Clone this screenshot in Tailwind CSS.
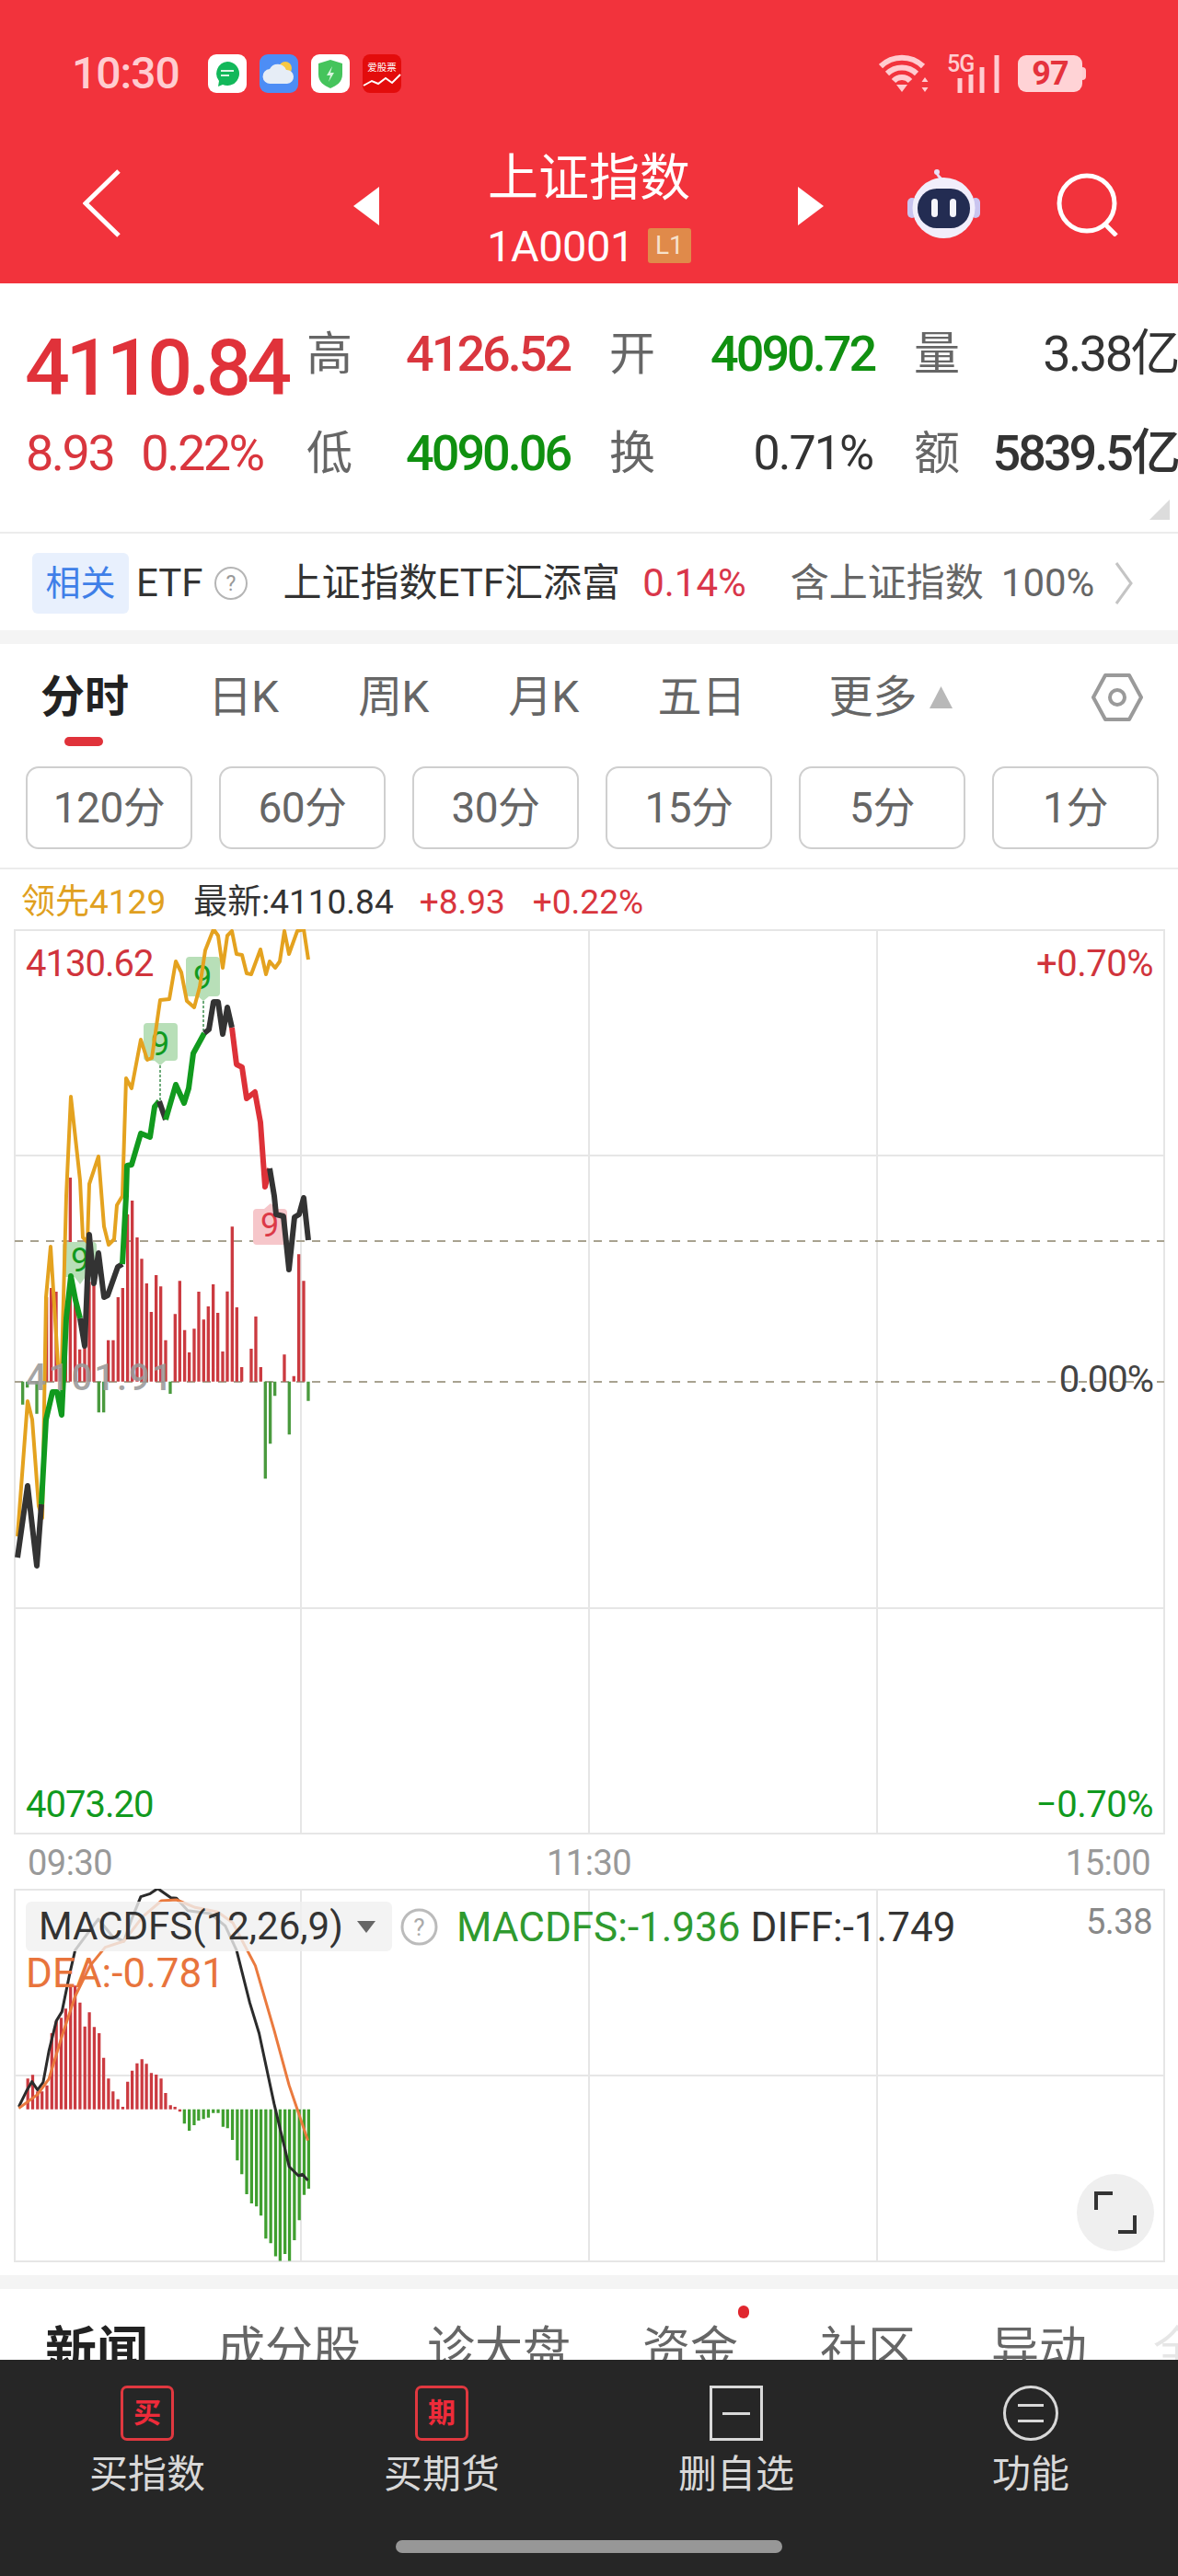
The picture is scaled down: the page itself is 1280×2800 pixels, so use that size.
<!DOCTYPE html>
<html lang="zh">
  <head>
    <meta charset="UTF-8" />
    <meta name="viewport" content="width=device-width, initial-scale=1.0" />
    <script src="https://cdn.jsdelivr.net/npm/@tailwindcss/browser@4"></script>
    <title>上证指数</title>
  </head>
  <body class="bg-white font-[Roboto,'Noto_Sans_CJK_SC',sans-serif]">
    <div class="w-[1280px] h-[2800px] flex flex-col overflow-hidden">

      <!-- red header -->
      <header class="h-[308px] shrink-0 bg-[#f2333c]">
        <div class="h-[160px] flex items-center pl-[78px] pr-[100px]">
          <span class="w-[118px] text-[48px] leading-none font-medium tracking-[-1px] text-[#ffccd0]">10:30</span>
          <div class="ml-[30px] flex gap-[14px]">
            <svg class="w-[42px] h-[42px]" viewBox="0 0 42 42"><rect width="42" height="42" rx="9" fill="#fff"/><path d="M21 8a13 13 0 1 1-5 25l-5 2 1-6a13 13 0 0 1 9-21z" fill="#12b85a"/><path d="M14 18h14M14 23h9" stroke="#d8f5e3" stroke-width="2"/></svg>
            <svg class="w-[42px] h-[42px]" viewBox="0 0 42 42"><rect width="42" height="42" rx="9" fill="#4d8df5"/><circle cx="28" cy="15" r="7" fill="#f7c843"/><path d="M12 32a8 8 0 0 1-1-16 10 10 0 0 1 18 1 7.500 7.500 0 0 1 1 15z" fill="#e6edf6"/></svg>
            <svg class="w-[42px] h-[42px]" viewBox="0 0 42 42"><rect width="42" height="42" rx="9" fill="#fff"/><path d="M21 6l13 4v12c0 8-6 12-13 15-7-3-13-7-13-15V10z" fill="#45c45c"/><path d="M23 13l-6 10h4l-2 7 6-10h-4z" fill="#d8f5de"/></svg>
            <svg class="w-[42px] h-[42px]" viewBox="0 0 42 42"><rect width="42" height="42" rx="8" fill="#e30c0c"/><text x="21" y="18" text-anchor="middle" font-size="10.500" fill="#fff" font-family="Noto Sans CJK SC">爱股票</text><path d="M1 34l9-5 7 3 8-6 7 5 9-9" fill="none" stroke="#fff" stroke-width="2"/></svg>
          </div>
          <div class="ml-auto flex items-center">
            <svg class="w-[57px] h-[42px]" viewBox="0 0 57 42" fill="none" stroke="#ffccd0" stroke-width="6"><path d="M2 13a33 33 0 0 1 46 0M9 21a23 23 0 0 1 32 0M16 29a12 12 0 0 1 18 0"/><path d="M25 41l-6-8h12z" fill="#ffccd0" stroke="none"/><path d="M50 25l3.500 5h-7zM50 41l3.500-5h-7z" fill="#ffccd0" stroke="none"/></svg>
            <svg class="ml-[17px] w-[57px] h-[42px]" viewBox="0 0 57 42"><text x="0" y="19" font-size="25" font-weight="500" fill="#ffccd0" font-family="Roboto" letter-spacing="-1">5G</text><path d="M14 42V26M26 42V22M38 42V14M54 42V1" stroke="#ffccd0" stroke-width="5"/></svg>
            <div class="ml-[20px] flex items-center">
              <span class="w-[70px] h-[40px] rounded-[9px] bg-[#ffd3d6] flex items-center justify-center text-[36px] leading-none font-bold tracking-[-1px] text-[#e5323c]">97</span>
              <span class="w-[4px] h-[14px] rounded-r bg-[#ffccd0]"></span>
            </div>
          </div>
        </div>
        <nav class="h-[148px] flex items-start pl-[90px]">
          <svg class="mt-[24px] w-[41px] h-[74px]" viewBox="0 0 41 74" fill="none" stroke="#fff" stroke-width="5"><path d="M39 2L3 37l36 35"/></svg>
          <svg class="ml-[253px] mt-[43px] w-[28px] h-[42px]" viewBox="0 0 28 42"><path d="M28 0v42L0 21z" fill="#fff"/></svg>
          <div class="ml-[28px] w-[400px] flex flex-col items-center text-white">
            <div class="mt-[3px] text-[55px] leading-[60px]">上证指数</div>
            <div class="mt-[21px] h-[46px] flex items-center">
              <span class="text-[47px] leading-none tracking-[-0.5px]">1A0001</span>
              <span class="ml-[15px] w-[47px] h-[38px] rounded-[3px] bg-[#e08a4a] flex items-center justify-center text-[28px] leading-none text-[#f7e2cc]">L1</span>
            </div>
          </div>
          <svg class="ml-[27px] mt-[43px] w-[28px] h-[42px]" viewBox="0 0 28 42"><path d="M0 0v42L28 21z" fill="#fff"/></svg>
          <svg class="ml-[90px] mt-[23px] w-[81px] h-[76px]" viewBox="0 0 81 76">
            <path d="M40 14c-3-4-6-5-7-9" fill="none" stroke="#e9dff6" stroke-width="3"/><circle cx="33" cy="4" r="3" fill="#e9dff6"/>
            <rect x="1" y="32" width="10" height="22" rx="5" fill="#c9c4ef"/><rect x="70" y="32" width="10" height="22" rx="5" fill="#c9c4ef"/>
            <ellipse cx="40.500" cy="43" rx="34" ry="33" fill="#f1eefb"/>
            <rect x="12" y="22" width="57" height="43" rx="21" fill="#232c52"/>
            <rect x="27" y="33" width="7" height="20" rx="3.500" fill="#f4f4fb"/><rect x="47" y="33" width="7" height="20" rx="3.500" fill="#f4f4fb"/>
          </svg>
          <svg class="ml-[82px] mt-[28px] w-[69px] h-[69px]" viewBox="0 0 69 69" fill="none" stroke="#fff" stroke-width="5"><circle cx="33" cy="33" r="30"/><path d="M52 55l13 13"/></svg>
        </nav>
      </header>

      <!-- quote numbers -->
      <section class="relative h-[272px] shrink-0 border-b-2 border-[#ececec] pt-[23px]">
        <div class="grid grid-cols-[333px_108px_221px_110px_221px_1fr] auto-rows-[108px] items-center text-[50px] leading-none text-[#666]">
          <div class="pl-[27px] pt-[30px] text-[86px] font-medium tracking-[-4.500px] text-[#e0323a]">4110.84</div>
          <div>高</div>
          <div class="pr-[46px] text-right text-[54px] font-medium tracking-[-3px] text-[#d9363e]">4126.52</div>
          <div>开</div>
          <div class="pr-[45px] text-right text-[54px] font-medium tracking-[-3px] text-[#109010]">4090.72</div>
          <div class="flex items-center justify-between whitespace-nowrap"><span>量</span><span class="text-[54px] tracking-[-2.500px] text-[#333]">3.38亿</span></div>

          <div class="pl-[28px] flex gap-[30px] text-[54px] tracking-[-2.500px] text-[#d9363e]"><span>8.93</span><span>0.22%</span></div>
          <div>低</div>
          <div class="pr-[46px] text-right text-[54px] font-medium tracking-[-3px] text-[#109010]">4090.06</div>
          <div>换</div>
          <div class="pr-[45px] text-right text-[52px] tracking-[-2px] text-[#333]">0.71%</div>
          <div class="flex items-center justify-between whitespace-nowrap"><span>额</span><span class="text-[54px] font-medium tracking-[-3px] text-[#333]">5839.5亿</span></div>
        </div>
        <svg class="absolute right-[9px] bottom-[13px] w-[22px] h-[22px]" viewBox="0 0 22 22"><path d="M22 0v22H0z" fill="#dcdcdc"/></svg>
      </section>

      <!-- related ETF -->
      <section class="h-[105px] shrink-0 flex items-center pl-[35px] pt-[2px] text-[42px] leading-none whitespace-nowrap">
        <span class="w-[105px] h-[66px] rounded-[6px] bg-[#e8f0fd] flex items-center justify-center text-[38px] text-[#3f7fe8]">相关</span>
        <span class="ml-[8px] text-[#333]">ETF</span>
        <svg class="ml-[11px] w-[38px] h-[38px]" viewBox="0 0 38 38" fill="none"><circle cx="19" cy="19" r="17" stroke="#b5b5b5" stroke-width="2"/><text x="19" y="27" text-anchor="middle" font-size="23" fill="#999" font-family="Roboto">?</text></svg>
        <span class="ml-[38px] text-[#333]">上证指数ETF汇添富</span>
        <span class="ml-[24px] text-[#d9364a]">0.14%</span>
        <span class="ml-[48px] text-[#666]">含上证指数</span>
        <span class="ml-[19px] text-[#666]">100%</span>
        <svg class="ml-[22px] w-[20px] h-[48px]" viewBox="0 0 20 48" fill="none" stroke="#c4c4c4" stroke-width="3"><path d="M2 2l16 22L2 46"/></svg>
      </section>
      <div class="h-[15px] shrink-0 bg-[#f4f4f4]"></div>

      <!-- period tabs -->
      <section class="relative h-[133px] shrink-0 text-[48px] leading-none text-[#666] whitespace-nowrap">
        <div class="h-[118px] flex items-center pl-[44px] pb-[2px]">
          <span class="font-bold text-[#222]">分时</span>
          <span class="ml-[86px] tracking-[-1px]">日K</span>
          <span class="ml-[87px] tracking-[-1px]">周K</span>
          <span class="ml-[87px] tracking-[-1px]">月K</span>
          <span class="ml-[86px]">五日</span>
          <span class="ml-[90px]">更多</span>
          <svg class="ml-[14px] w-[25px] h-[24px]" viewBox="0 0 25 24"><path d="M12.500 0L25 24H0z" fill="#b8b8b8"/></svg>
          <svg class="ml-[151px] w-[56px] h-[54px]" viewBox="0 0 56 54" fill="none" stroke="#9a9a9a" stroke-width="4"><path d="M15 3h26l13 24-13 24H15L2 27z" stroke-linejoin="round"/><circle cx="28" cy="27" r="8"/></svg>
        </div>
        <span class="absolute left-[70px] top-[101px] w-[42px] h-[10px] rounded-full bg-[#e0323a]"></span>
      </section>
      <section class="h-[112px] shrink-0 border-b-2 border-[#ececec] pl-[28px] pr-[21px]">
        <div class="grid grid-cols-6 gap-[29px] text-[46px] leading-none text-[#666]">
          <button class="h-[90px] rounded-[14px] border-2 border-[#cfcfcf] tracking-[-0.5px]">120分</button>
          <button class="h-[90px] rounded-[14px] border-2 border-[#cfcfcf] tracking-[-0.5px]">60分</button>
          <button class="h-[90px] rounded-[14px] border-2 border-[#cfcfcf] tracking-[-0.5px]">30分</button>
          <button class="h-[90px] rounded-[14px] border-2 border-[#cfcfcf] tracking-[-0.5px]">15分</button>
          <button class="h-[90px] rounded-[14px] border-2 border-[#cfcfcf] tracking-[-0.5px]">5分</button>
          <button class="h-[90px] rounded-[14px] border-2 border-[#cfcfcf] tracking-[-0.5px]">1分</button>
        </div>
      </section>

      <!-- chart legend -->
      <div class="h-[65px] shrink-0 flex items-center pl-[23px] pt-[5px] text-[37px] leading-none whitespace-nowrap">
        <span class="text-[#e0a020]">领先4129</span>
        <span class="ml-[30px] text-[#333]">最新:4110.84</span>
        <span class="ml-[28px] text-[#d9363e]">+8.93</span>
        <span class="ml-[30px] text-[#d9363e]">+0.22%</span>
      </div>

      <!-- time-share chart -->
      <section class="relative h-[984px] shrink-0 text-[40px] leading-none">
        <svg class="absolute inset-0 w-[1280px] h-[984px]" viewBox="0 1010 1280 984" fill="none">
          <path d="M16 1011H1265V1993H16ZM327 1011V1993M640 1011V1993M953 1011V1993M16 1256H1265M16 1748H1265" stroke="#e6e6e6" stroke-width="2"/>
          <path d="M16 1349H1265M16 1502H1265" stroke="#a8a290" stroke-width="2" stroke-dasharray="9 8"/>
          <g transform="translate(0 1300) scale(.3333)" stroke-width="10">
            <path d="M152 605V330M167 605V300M183 605V312M198 605V560M214 605V480M229 605V-60M245 605V350M260 605V500M276 605V420M291 605V280M306 605V290M353 605V470M369 605V470M385 605V330M400 605V300M416 605V60M431 605V15M447 605V135M462 605V205M478 605V285M493 605V378M509 605V258M524 605V295M540 605V470M571 605V385M586 605V277M602 605V437M617 605V510M633 605V433M648 605V312M664 605V403M679 605V360M695 605V288M710 605V381M726 605V507M741 605V311M757 605V100M772 605V363M788 605V558M819 605V498M834 605V393M850 605V558M927 605V517M958 605V587M974 605V190M990 605V277" stroke="#cb3a40"/>
            <path d="M74 605V680M89 605V625M120 605V710M322 605V706M338 605V706M555 605V645M865 605V922M881 605V808M896 605V652M943 605V778M1005 605V668" stroke="#4a9a3e"/>
          </g>
          <!-- signal badges -->
          <path d="M156 1116a4 4 0 0 1 4-4h29a4 4 0 0 1 4 4v33a4 4 0 0 1-4 4h-9l-6 5-6-5h-8a4 4 0 0 1-4-4zM202 1044a4 4 0 0 1 4-4h29a4 4 0 0 1 4 4v35a4 4 0 0 1-4 4h-8l-6 5-6-5h-9a4 4 0 0 1-4-4zM68 1354a4 4 0 0 1 4-4h29a4 4 0 0 1 4 4v30a4 4 0 0 1-4 4h-8l-6 8-6-8h-9a4 4 0 0 1-4-4z" fill="#b8dfb8"/>
          <path d="M275 1318a4 4 0 0 1 4-4h8l7-6 7 6h7a4 4 0 0 1 4 4v31a4 4 0 0 1-4 4h-29a4 4 0 0 1-4-4z" fill="#f6c6ca"/>
          <path d="M174 1158V1197M221 1088V1120" stroke="#3f8f4f" stroke-width="1.500" stroke-dasharray="3 2"/>
          <path d="M87 1396V1432" stroke="#fff" stroke-width="1.500" stroke-dasharray="3 2"/>
          <g font-family="Roboto" font-size="36" text-anchor="middle">
            <text x="174" y="1147" fill="#119a1e">9</text><text x="220" y="1075" fill="#119a1e">9</text><text x="87" y="1382" fill="#119a1e">9</text><text x="293" y="1344" fill="#dc3a48">9</text>
          </g>
          <!-- leading line -->
          <path d="M19 1670L30 1523 35 1543 42 1637 46 1650 50 1410 55 1355 63 1483 67 1485 72 1300 77 1192 87 1283 90 1345 95 1350 97 1287 107 1257 113 1333 118 1353 124 1347 127 1310 133 1300 137 1172 143 1183 153 1130 160 1152 165 1150 174 1087 184 1086 191 1045 197 1057 203 1088 211 1095 217 1073 223 1033 232 1010 237 1017 242 1052 247 1017 252 1012 257 1037 263 1038 268 1058 273 1059 283 1032 289 1059 293 1045 299 1052 304 1045 309 1012 314 1037 323 1012 330 1010 335 1043" stroke="#e4a21f" stroke-width="4" stroke-linejoin="round"/>
          <!-- price line -->
          <g stroke-width="6" stroke-linejoin="round">
            <path d="M19 1693L30 1615 40 1702 45 1635" stroke="#333"/>
            <path d="M45 1635L50 1543 57 1513 62 1513 67 1538 72 1433 77 1387 82 1413 87 1433" stroke="#119a1e"/>
            <path d="M87 1433L92 1463 97 1342 102 1395 107 1362 113 1410 117 1408 128 1377 133 1374" stroke="#333"/>
            <path d="M133 1374L137 1300 138 1267 143 1266 153 1232 163 1236 168 1203 173 1197" stroke="#119a1e"/>
            <path d="M173 1197L180 1217" stroke="#333"/>
            <path d="M180 1217L191 1179 200 1199 205 1183 210 1145 222 1123" stroke="#119a1e"/>
            <path d="M222 1123L227 1119 232 1089 237 1089 242 1124 247 1095 252 1117" stroke="#333"/>
            <path d="M252 1117L257 1157 263 1160 268 1194 277 1187 283 1220 288 1290 293 1270" stroke="#dd3138"/>
            <path d="M293 1270L298 1300 300 1320 308 1322 314 1380 320 1323 325 1320 330 1302 335 1348" stroke="#333"/>
          </g>
        </svg>
        <span class="absolute left-[28px] top-[18px] tracking-[-1px] text-[#d0343c]">4130.62</span>
        <span class="absolute right-[27px] top-[18px] tracking-[-0.5px] text-[#d0343c]">+0.70%</span>
        <span class="absolute left-[28px] top-[468px] tracking-[2px] text-[#999]/90 font-medium">4101.91</span>
        <span class="absolute right-[27px] top-[470px] tracking-[-1px] text-[#444]">0.00%</span>
        <span class="absolute left-[28px] top-[932px] tracking-[-1px] text-[#119a1e]">4073.20</span>
        <span class="absolute right-[27px] top-[932px] tracking-[-0.5px] text-[#119a1e]">−0.70%</span>
      </section>

      <!-- time axis -->
      <div class="h-[59px] shrink-0 relative flex items-center justify-between px-[30px] pt-[2px] text-[38px] leading-none tracking-[-0.5px] text-[#999]">
        <span>09:30</span>
        <span class="absolute left-[594px]">11:30</span>
        <span>15:00</span>
      </div>

      <!-- MACD -->
      <section class="relative h-[407px] shrink-0 leading-none whitespace-nowrap">
        <svg class="absolute inset-0 w-[1280px] h-[407px]" viewBox="0 2053 1280 407" fill="none">
          <path d="M16 2054H1265V2458H16ZM327 2054V2458M640 2054V2458M953 2054V2458M16 2256H1265" stroke="#e6e6e6" stroke-width="2"/>
          <g transform="translate(0 1980) scale(.408 .3333)" stroke-width="8">
            <path d="M74 938V838M87 938V826M100 938V880M112 938V880M125 938V860M138 938V690M150 938V650M163 938V640M175 938V610M188 938V535M200 938V535M213 938V590M226 938V668M238 938V622M251 938V670M264 938V690M276 938V770M289 938V838M301 938V880M314 938V905M327 938V930M340 938V848M352 938V812M365 938V788M378 938V775M390 938V790M403 938V820M416 938V825M429 938V838M441 938V885M454 938V925M466 938V930M479 938V946" stroke="#cb3a40"/>
            <path d="M491 938V985M504 938V1008M517 938V990M529 938V975M542 938V970M555 938V965M568 938V950M581 938V950M594 938V995M606 938V1000M619 938V1038M632 938V1105M644 938V1150M657 938V1215M670 938V1245M683 938V1255M695 938V1285M708 938V1360M721 938V1375M734 938V1418M746 938V1433M759 938V1410M771 938V1433M784 938V1365M797 938V1300M810 938V1217M822 938V1197" stroke="#3f9f2f"/>
            <path d="M50 930L70 880 85 848 100 875 115 850 130 750 150 650 165 620 185 500 200 420 230 370 262 318 300 375 330 390 350 320 375 245 400 235 420 218 455 248 470 250 500 290 560 300 600 340 630 420 665 590 690 690 730 920 770 1125 795 1155 805 1150 820 1170" stroke="#2b2b2b" stroke-width="3" vector-effect="non-scaling-stroke" stroke-linejoin="round"/>
            <path d="M50 935L100 890 130 840 165 700 200 570 240 470 280 410 330 390 380 310 430 258 470 255 520 280 580 295 620 330 680 470 730 680 770 860 820 1040" stroke="#ea7a3e" stroke-width="3" vector-effect="non-scaling-stroke" stroke-linejoin="round"/>
          </g>
        </svg>
        <div class="absolute left-[28px] top-[14px] w-[398px] h-[54px] rounded-[6px] bg-[#f0f0f0]/80 flex items-center pl-[14px] text-[42px] text-[#333]">
          MACDFS(12,26,9)
          <svg class="absolute left-[360px] top-[21px] w-[20px] h-[13px]" viewBox="0 0 20 13"><path d="M0 0h20L10 13z" fill="#666"/></svg>
        </div>
        <svg class="absolute left-[435px] top-[21px] w-[41px] h-[41px]" viewBox="0 0 41 41" fill="none"><circle cx="20.500" cy="20.500" r="18.500" stroke="#bbb" stroke-width="3"/><text x="20.500" y="30" text-anchor="middle" font-size="26" fill="#aaa" font-family="Roboto">?</text></svg>
        <div class="absolute left-[496px] top-[21px] h-[41px] flex items-center text-[44px]">
          <span class="text-[#2f9a2f]">MACDFS:-1.936</span>
          <span class="ml-[11px] text-[#333]">DIFF:-1.749</span>
        </div>
        <span class="absolute left-[28px] top-[70px] text-[44px] text-[#e8743c]">DEA:-0.781</span>
        <span class="absolute right-[28px] top-[17px] text-[38px] tracking-[-0.5px] text-[#888]">5.38</span>
        <div class="absolute left-[1170px] top-[310px] w-[84px] h-[84px] rounded-full bg-[#efefef] flex items-center justify-center">
          <svg class="w-[46px] h-[46px]" viewBox="0 0 46 46" fill="none" stroke="#333" stroke-width="4"><path d="M2 20V2h18M44 26v18H26"/></svg>
        </div>
      </section>

      <div class="h-[13px] shrink-0"></div>
      <div class="h-[15px] shrink-0 bg-[#f4f4f4]"></div>

      <!-- news tabs, cut off by the toolbar -->
      <section class="relative h-[77px] shrink-0 overflow-hidden text-[52px] leading-none text-[#666] whitespace-nowrap">
        <div class="flex items-start pl-[49px] pt-[40px] w-[1400px]">
          <span class="text-[56px] font-bold text-[#222]">新闻</span>
          <span class="ml-[75px] mt-[1px]">成分股</span>
          <span class="ml-[72px] mt-[1px]">诊大盘</span>
          <span class="ml-[78px] mt-[1px]">资金</span>
          <span class="ml-[89px] mt-[1px]">社区</span>
          <span class="ml-[82px] mt-[1px]">异动</span>
          <span class="ml-[72px] mt-[1px] text-[#e6e6e6]">全部</span>
        </div>
        <span class="absolute left-[802px] top-[18px] w-[12px] h-[14px] rounded-full bg-[#e0262e]"></span>
      </section>

      <!-- bottom toolbar -->
      <footer class="relative h-[235px] shrink-0 bg-[#262626] text-[#d8d8d8]">
        <div class="grid grid-cols-4 pt-[28px]">
          <div class="flex flex-col items-center">
            <span class="w-[58px] h-[60px] rounded-[7px] border-[3px] border-[#e0383f] flex items-center justify-center text-[30px] leading-none font-bold text-[#ee2b3a]">买</span>
            <span class="mt-[16px] text-[42px] leading-none">买指数</span>
          </div>
          <div class="flex flex-col items-center">
            <span class="w-[58px] h-[60px] rounded-[7px] border-[3px] border-[#e0383f] flex items-center justify-center text-[30px] leading-none font-bold text-[#ee2b3a]">期</span>
            <span class="mt-[16px] text-[42px] leading-none">买期货</span>
          </div>
          <div class="flex flex-col items-center">
            <span class="w-[58px] h-[60px] border-[3px] border-[#d8d8d8] flex items-center justify-center"><span class="w-[30px] h-[3px] bg-[#d8d8d8]"></span></span>
            <span class="mt-[16px] text-[42px] leading-none">删自选</span>
          </div>
          <div class="flex flex-col items-center">
            <span class="w-[60px] h-[60px] rounded-full border-[3px] border-[#d8d8d8] flex flex-col items-center justify-center gap-[14px]"><span class="w-[28px] h-[3px] bg-[#d8d8d8]"></span><span class="w-[28px] h-[3px] bg-[#d8d8d8]"></span></span>
            <span class="mt-[16px] text-[42px] leading-none">功能</span>
          </div>
        </div>
        <span class="absolute left-[430px] top-[196px] w-[420px] h-[14px] rounded-full bg-[#979797]"></span>
      </footer>
    </div>
  </body>
</html>
